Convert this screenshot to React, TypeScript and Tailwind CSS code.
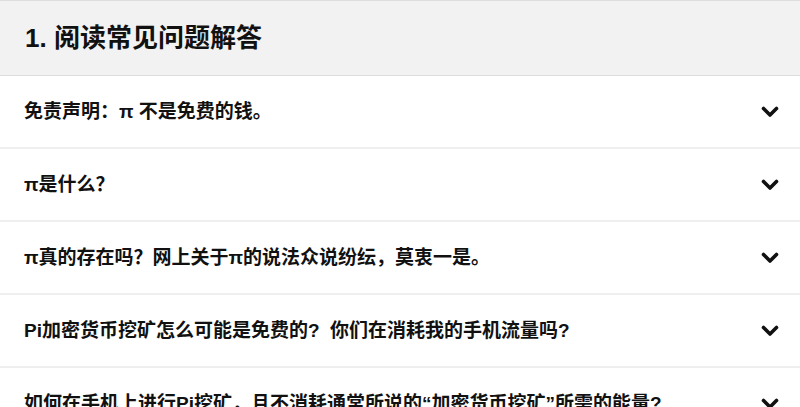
import React from 'react';

const questions: { text: string; light?: boolean }[] = [
  { text: '免责声明：π 不是免费的钱。' },
  { text: 'π是什么？' },
  { text: 'π真的存在吗？网上关于π的说法众说纷纭，莫衷一是。' },
  { text: 'Pi加密货币挖矿怎么可能是免费的?  你们在消耗我的手机流量吗?', light: true },
  { text: '如何在手机上进行Pi挖矿，且不消耗通常所说的“加密货币挖矿”所需的能量?', light: true },
];

const Chevron: React.FC = () => (
  <svg width="18" height="14" viewBox="0 0 18 14" className="shrink-0">
    <path d="M2.5 3.5 L9 10 L15.5 3.5" fill="none" stroke="#111" strokeWidth="3.6" strokeLinecap="round" strokeLinejoin="round" />
  </svg>
);

export default function App() {
  return (
    <div
      className="w-[800px] h-[407px] overflow-hidden bg-white text-[#111]"
      style={{ fontFamily: '"Liberation Sans", "Noto Sans CJK SC", sans-serif' }}
    >
      <div className="h-[76px] bg-[#f2f2f2] border-t border-b border-[#dedede] flex items-center px-[25px]">
        <h1 className="text-[26px] font-bold leading-none">1. 阅读常见问题解答</h1>
      </div>
      {questions.map((q, i) => (
        <div
          key={i}
          className="h-[73px] border-b-2 border-[#efefef] flex items-center justify-between pl-[24px] pr-[21px]"
        >
          <span className={`text-[19px] leading-none whitespace-pre ${q.light ? 'font-semibold' : 'font-bold'}`}>
            {q.text}
          </span>
          <Chevron />
        </div>
      ))}
    </div>
  );
}
